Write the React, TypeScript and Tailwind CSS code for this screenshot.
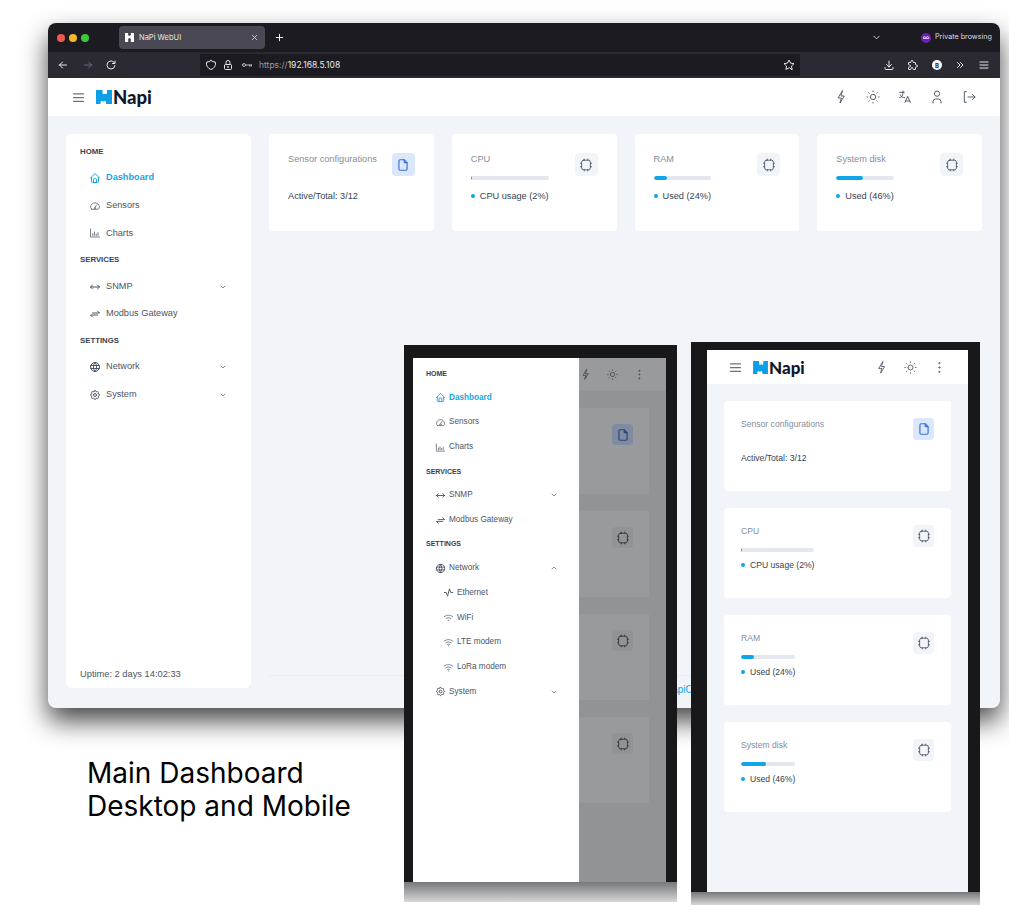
import React from "react";
import {
  TbSun, TbLanguage, TbUser, TbMenu2, TbHome, TbArrowsHorizontal,
  TbArrowsExchange, TbWorld, TbSettings, TbChevronDown, TbChevronUp, TbFile, TbDotsVertical, TbActivity,
  TbArrowLeft, TbArrowRight, TbReload, TbShield, TbStar, TbDownload, TbLock, TbX, TbPlus,
  TbChevronsRight, TbPuzzle,
} from "react-icons/tb";

const sans = "font-['Liberation_Sans',sans-serif]";

function Glyph({ d, className }: { d: string; className?: string }) {
  return (
    <svg viewBox="0 0 24 24" width="1em" height="1em" fill="none" stroke="currentColor" strokeWidth="1.5" strokeLinecap="round" strokeLinejoin="round" className={className}>
      <path d={d} />
    </svg>
  );
}
const Bolt = () => <Glyph d="M14 3 7.500 13.500h5L10.500 21l6.500-10.500h-5L14 3z" />;
const Logout = () => <Glyph d="M8 4H5v16h3M10.500 12H21M17 8l4 4-4 4" />;
const Gauge = () => <Glyph d="M5.500 18.500h13c3.500-2.500 3-7-.5-10.500-3.500-3-8.500-3-12 0-3.500 3.500-4 8-.5 10.500zM12 15l3-5M10.500 15.500a1.700 1.700 0 1 0 3 0" />;
const Bars = () => <Glyph d="M3 4v16h18M7.500 17v-4M11 17v-7M14.500 17v-3M18 17v-6" />;
const Wifi2 = () => <Glyph d="M3 10c5-4 13-4 18 0M7 14c3-2 7-2 10 0M11 18h2" />;
const Wifi3 = () => <Glyph d="M2.500 9c5.500-4.500 13.500-4.500 19 0M6 13c3.500-3 8.500-3 12 0M9 16.500c2-1.200 4-1.200 6 0M11.500 19.500h1" />;
const Key = () => <Glyph d="M3 12a3 3 0 1 0 6 0 3 3 0 1 0-6 0M9 12h12M17.500 12v3M21 12v2" />;

function Logo({ small }: { small?: boolean }) {
  return (
    <div className="flex items-center gap-[1px]">
      <svg width={small ? 15 : 16} height={small ? 13 : 14} viewBox="0 0 16 14">
        <path d="M0 0h6.500v3c0 1.100 1 1.500 1.800.9l.6-.5.6.5c.7.6 1.500.2 1.500-.9V0H16v14h-6v-1.800c0-1.100-1-1.600-1.800-1-.6.5-1 .5-1.500.1-.8-.7-2.200-.2-2.200 1V14H0V0z" fill="#0c9fe8" />
      </svg>
      <span className={`font-['Lato',sans-serif] leading-none font-black text-[#10172a] ${small ? "text-[17px]" : "text-[18.5px]"}`}>Napi</span>
    </div>
  );
}

function Chip({ className }: { className?: string }) {
  return (
    <svg viewBox="0 0 16 16" fill="none" stroke="currentColor" strokeWidth="1" strokeLinecap="round" className={className}>
      <rect x="3" y="2.500" width="10" height="11" rx="2.200" />
      <path d="M6 1.200v1.300M10 1.200v1.300M6 13.500v1.300M10 13.500v1.300M1.700 6H3M1.700 10H3M13 6h1.300M13 10h1.300" />
    </svg>
  );
}

function Row({ icon, label, active, chevron, variant, sub }: { icon: React.ReactNode; label: string; active?: boolean; chevron?: "down" | "up"; variant: "d" | "m"; sub?: boolean }) {
  const d = variant === "d";
  return (
    <div className={`flex items-center ${d ? "h-[27.6px] text-[9.2px] pl-[8px] pr-[24px]" : "h-[24.7px] text-[8.2px] pr-[21px]"} ${!d ? (sub ? "pl-[17px]" : "pl-[9px]") : ""} ${active ? "text-[#19a5e6] font-bold" : "text-[#4b5563]"}`}>
      <span className={`flex shrink-0 justify-center ${d ? "w-[14px] mr-[4px] text-[12px]" : "w-[11px] mr-[3px] text-[11px]"}`}>{icon}</span>
      <span className="flex-1 whitespace-nowrap">{label}</span>
      {chevron === "down" && <TbChevronDown className="text-[#4b5563] text-[8px]" />}
      {chevron === "up" && <TbChevronUp className="text-[#4b5563] text-[8px]" />}
    </div>
  );
}

function Section({ children, variant }: { children: React.ReactNode; variant: "d" | "m" }) {
  return <div className={`font-bold text-[#374151] ${variant === "d" ? "h-[25.5px] text-[7.8px] leading-[25.5px]" : "h-[23.5px] text-[7px] leading-[23.5px]"}`}>{children}</div>;
}

function Nav({ variant, expanded }: { variant: "d" | "m"; expanded?: boolean }) {
  return (
    <div>
      <Section variant={variant}>HOME</Section>
      <Row variant={variant} icon={<TbHome />} label="Dashboard" active />
      <Row variant={variant} icon={<Gauge />} label="Sensors" />
      <Row variant={variant} icon={<Bars />} label="Charts" />
      <Section variant={variant}>SERVICES</Section>
      <Row variant={variant} icon={<TbArrowsHorizontal />} label="SNMP" chevron="down" />
      <Row variant={variant} icon={<TbArrowsExchange />} label="Modbus Gateway" />
      <Section variant={variant}>SETTINGS</Section>
      <Row variant={variant} icon={<TbWorld />} label="Network" chevron={expanded ? "up" : "down"} />
      {expanded && (
        <>
          <Row variant={variant} sub icon={<TbActivity />} label="Ethernet" />
          <Row variant={variant} sub icon={<Wifi2 />} label="WiFi" />
          <Row variant={variant} sub icon={<Wifi3 />} label="LTE modem" />
          <Row variant={variant} sub icon={<Wifi3 />} label="LoRa modem" />
        </>
      )}
      <Row variant={variant} icon={<TbSettings />} label="System" chevron="down" />
    </div>
  );
}

function IconBox({ kind, mobile }: { kind: "file" | "chip"; mobile?: boolean }) {
  return (
    <div className={`flex shrink-0 items-center justify-center rounded-[4px] ${mobile ? "h-[22px] w-[21px]" : "h-[23px] w-[23px]"} ${kind === "file" ? "bg-[#dbe8fb] text-[#3b6fd6]" : "bg-[#f1f4f9] text-[#4b5563]"}`}>
      {kind === "file" ? <TbFile className="text-[14px]" /> : <Chip className="h-[14px] w-[14px]" />}
    </div>
  );
}

function Card({ title, kind, text, pct, mobile }: { title: string; kind: "file" | "chip"; text: string; pct?: number; mobile?: boolean }) {
  const t = mobile ? "text-[8.6px]" : "text-[9.2px]";
  return (
    <div className={`flex items-start justify-between rounded-[4px] bg-white ${mobile ? "h-[90px] pt-[17px] pl-[17px] pr-[17px]" : "h-[97px] pt-[19px] pl-[19px] pr-[19px]"}`}>
      <div>
        <div className={`${t} leading-[12px] text-[#858d9b] whitespace-nowrap`}>{title}</div>
        {pct !== undefined ? (
          <div className="w-fit">
            <div className="mt-[11px] h-[4px] overflow-hidden rounded-full bg-[#e3e8ee]">
              <div className="h-full rounded-full bg-[#0ea5e9]" style={{ width: `${pct}%` }} />
            </div>
            <div className={`flex items-center gap-[5px] ${t} leading-[12px] text-[#374151] whitespace-nowrap ${mobile ? "mt-[7px]" : "mt-[10px]"}`}>
              <span className="h-[4px] w-[4px] rounded-full bg-[#0ea5e9]" />
              {text}
            </div>
          </div>
        ) : (
          <div className={`${t} leading-[12px] text-[#374151] whitespace-nowrap ${mobile ? "mt-[22px]" : "mt-[25px]"}`}>{text}</div>
        )}
      </div>
      <IconBox kind={kind} mobile={mobile} />
    </div>
  );
}

const cards = [
  { title: "Sensor configurations", kind: "file" as const, text: "Active/Total: 3/12" },
  { title: "CPU", kind: "chip" as const, text: "CPU usage (2%)", pct: 2 },
  { title: "RAM", kind: "chip" as const, text: "Used (24%)", pct: 24 },
  { title: "System disk", kind: "chip" as const, text: "Used (46%)", pct: 46 },
];

function Browser() {
  return (
    <div className="absolute left-[48px] top-[23px] flex h-[685px] w-[952px] flex-col overflow-hidden rounded-[8px] bg-[#f1f4f9] shadow-[0_13px_26px_rgba(0,0,0,0.72)]">
      <div className="flex h-[29px] items-center bg-[#1c1b22] font-['Inter',sans-serif] text-white">
        <div className="ml-[9px] flex w-[62px] gap-[4px]">
          <span className="h-[8px] w-[8px] rounded-full bg-[#ee5a52]" />
          <span className="h-[8px] w-[8px] rounded-full bg-[#f5b72f]" />
          <span className="h-[8px] w-[8px] rounded-full bg-[#3ec83f]" />
        </div>
        <div className="flex h-[23px] w-[146px] items-center rounded-[4px] bg-[#4a4953] px-[6px] text-[7.5px] text-[#e5e5ea]">
          <svg width="9" height="9" viewBox="0 0 10 10" className="mr-[5px]"><path d="M0 0h3.500v2.500l1.500.8 1.500-.8V0H10v10H6.500V6.500L5 5.500 3.500 6.500V10H0z" fill="#fff" /></svg>
          <span className="flex-1">NaPi WebUI</span>
          <TbX className="text-[9px]" />
        </div>
        <TbPlus className="ml-[9px] text-[11px]" />
        <TbChevronDown className="ml-[586px] text-[11px] text-[#d4d4d8]" />
        <span className="ml-[39px] flex h-[10px] w-[10px] items-center justify-center rounded-full bg-[#6d1fb8] text-[7px] leading-none text-white">∞</span>
        <span className="ml-[4px] text-[7.2px] whitespace-nowrap text-[#dcdce0]">Private browsing</span>
      </div>
      <div className="flex h-[26px] items-center bg-[#2b2a33] font-['Inter',sans-serif] text-[#e5e5ea]">
        <TbArrowLeft className="ml-[9px] text-[12px]" />
        <TbArrowRight className="ml-[13px] text-[12px] text-[#6b6a73]" />
        <TbReload className="ml-[11px] text-[12px]" />
        <div className="ml-[83px] flex h-[22px] w-[600px] items-center bg-[#1c1b22] text-[12px]">
          <TbShield className="ml-[5px]" />
          <TbLock className="ml-[5px]" />
          <span className="ml-[7px]"><Key /></span>
          <span className="ml-[6px] flex-1 text-[8.5px]"><span className="text-[#9a9aa2]">https://</span><span className="text-[#e8e8ec]">192.168.5.108</span></span>
          <TbStar className="mr-[5px]" />
        </div>
        <TbDownload className="ml-[83px] text-[12px]" />
        <TbPuzzle className="ml-[12px] text-[12px]" />
        <span className="ml-[13px] flex h-[10px] w-[10px] items-center justify-center rounded-full bg-white text-[6px] font-bold text-[#2b2a33]">B</span>
        <TbChevronsRight className="ml-[12px] text-[12px]" />
        <TbMenu2 className="ml-[12px] text-[12px]" />
      </div>
      <div className="flex h-[38px] items-center bg-white">
        <TbMenu2 className="ml-[23px] text-[15px] text-[#6b7280]" />
        <div className="ml-[10px] flex-1"><Logo /></div>
        <div className="mr-[23px] flex gap-[16px] text-[16px] text-[#4b5563] [&_svg]:[stroke-width:1.4]">
          <Bolt /><TbSun /><TbLanguage /><TbUser /><Logout />
        </div>
      </div>
      <div className="flex flex-1 gap-[18px] px-[18px] pt-[18px] pb-[20px]">
        <div className="flex w-[185px] flex-col justify-between rounded-[6px] bg-white pl-[14px] pt-[5px] pb-[8px]">
          <Nav variant="d" />
          <div className="text-[9.3px] leading-[12px] text-[#4b5563]">Uptime: 2 days 14:02:33</div>
        </div>
        <div className="flex flex-1 flex-col justify-between">
          <div className="grid grid-cols-4 gap-[18px]">
            {cards.map((c) => <Card key={c.title} {...c} />)}
          </div>
          <div className="-mb-[13px] h-[26px] border-t border-[#e8ebf1] pt-[7px] pl-[396px] text-[10px] leading-[14px] text-[#0ea5e9]">NapiOS</div>
        </div>
      </div>
    </div>
  );
}

function PhoneLeft() {
  return (
    <div className="absolute left-[404px] top-[345px] flex h-[557px] w-[273px] flex-col">
      <div className="h-[537px] bg-[#18181a] pl-[9px] pr-[11px] pt-[13px]">
        <div className="relative h-[524px] overflow-hidden bg-[#919395]">
          <div className="ml-[166px] flex h-[33px] items-center justify-end gap-[14px] bg-[#999a9b] pr-[20px] text-[15px] text-[#3f4146] [&_svg]:[stroke-width:1.4]">
            <Bolt /><TbSun /><TbDotsVertical />
          </div>
          <div className="ml-[166px] flex flex-col gap-[17px] pt-[17px]">
            {["file", "chip", "chip", "chip"].map((k, i) => (
              <div key={i} className="flex h-[86px] w-[70px] justify-end bg-[#999a9b] pr-[16px] pt-[16px]">
                <div className={`flex h-[21px] w-[21px] items-center justify-center rounded-[4px] ${k === "file" ? "bg-[#7f8ba0] text-[#2b4377]" : "bg-[#919395] text-[#2f3136]"}`}>
                  {k === "file" ? <TbFile className="text-[14px]" /> : <Chip className="h-[14px] w-[14px]" />}
                </div>
              </div>
            ))}
          </div>
          <div className="absolute inset-y-0 left-0 w-[166px] bg-white pl-[13px] pt-[4px]">
            <Nav variant="m" expanded />
          </div>
        </div>
      </div>
      <div className="flex-1 bg-gradient-to-b from-[#77787a] to-[#d8d8d8]" />
    </div>
  );
}

function PhoneRight() {
  return (
    <div className="absolute left-[691px] top-[342px] flex h-[563px] w-[289px] flex-col">
      <div className="h-[550px] bg-[#18181a] pl-[16px] pr-[12px] pt-[8px]">
        <div className="h-[542px] overflow-hidden bg-[#f1f4f9]">
          <div className="flex h-[34px] items-center bg-white">
            <TbMenu2 className="ml-[21px] text-[15px] text-[#6b7280]" />
            <div className="ml-[10px] flex-1"><Logo small /></div>
            <div className="mr-[21px] flex gap-[14px] text-[15px] text-[#4b5563] [&_svg]:[stroke-width:1.4]">
              <Bolt /><TbSun /><TbDotsVertical />
            </div>
          </div>
          <div className="flex flex-col gap-[17px] pl-[17px] pr-[17px] pt-[17px]">
            {cards.map((c) => <Card key={c.title} {...c} mobile />)}
          </div>
        </div>
      </div>
      <div className="flex-1 bg-gradient-to-b from-[#77787a] to-[#d8d8d8]" />
    </div>
  );
}

export default function App() {
  return (
    <div className={`relative h-[915px] w-[1009px] overflow-hidden bg-white ${sans}`}>
      <Browser />
      <div className="absolute left-[87px] top-[757px] font-['Inter',sans-serif] text-[28px] leading-[33px] font-normal text-black">
        <div>Main Dashboard</div>
        <div>Desktop and Mobile</div>
      </div>
      <PhoneLeft />
      <PhoneRight />
    </div>
  );
}
